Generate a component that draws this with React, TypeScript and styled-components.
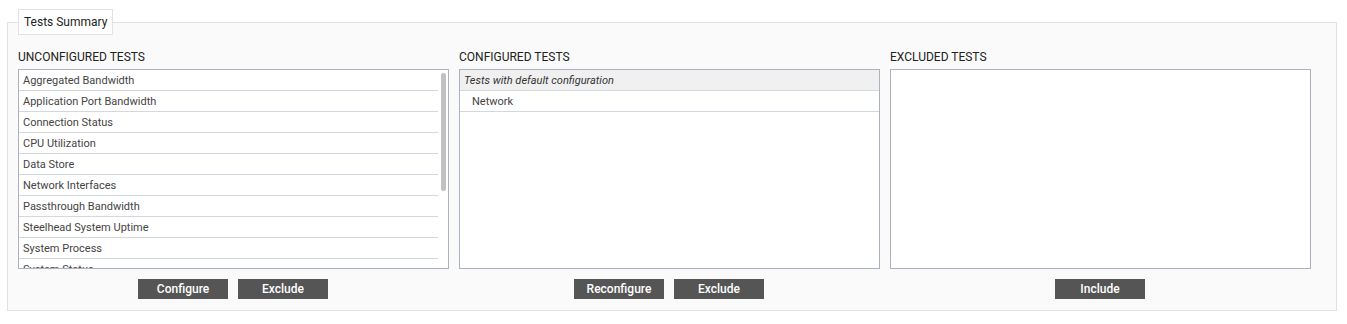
import styled, { createGlobalStyle } from "styled-components";

const unconfigured = [
  "Aggregated Bandwidth",
  "Application Port Bandwidth",
  "Connection Status",
  "CPU Utilization",
  "Data Store",
  "Network Interfaces",
  "Passthrough Bandwidth",
  "Steelhead System Uptime",
  "System Process",
  "System Status",
  "TCP Connections",
  "Temperature",
  "Throughput",
  "Traffic Summary",
  "Uptime",
  "WAN Bandwidth",
];

const GlobalStyle = createGlobalStyle`
  body {
    margin: 0;
    background: #fff;
    font-family: Roboto, "Liberation Sans", Arial, sans-serif;
  }
`;

export default function App() {
  return (
    <>
      <GlobalStyle />
      <Fieldset>
        <Legend>Tests Summary</Legend>
        <Columns>
          <Column>
            <Label>Unconfigured Tests</Label>
            <ListBox>
              <Rows>
                {unconfigured.map((name) => (
                  <Row key={name}>{name}</Row>
                ))}
              </Rows>
              <ScrollTrack>
                <ScrollThumb />
              </ScrollTrack>
            </ListBox>
            <Buttons>
              <Button>Configure</Button>
              <Button>Exclude</Button>
            </Buttons>
          </Column>
          <Column>
            <Label>Configured Tests</Label>
            <ListBox>
              <Rows>
                <GroupRow>Tests with default configuration</GroupRow>
                <Row $indent>Network</Row>
              </Rows>
            </ListBox>
            <Buttons>
              <Button>Reconfigure</Button>
              <Button>Exclude</Button>
            </Buttons>
          </Column>
          <Column>
            <Label>Excluded Tests</Label>
            <ListBox />
            <Buttons>
              <Button>Include</Button>
            </Buttons>
          </Column>
        </Columns>
      </Fieldset>
    </>
  );
}

const Fieldset = styled.fieldset`
  box-sizing: border-box;
  width: 1330px;
  min-width: 0;
  margin: 9px 0 0 7px;
  padding: 14px 10px 11px 10px;
  border: 1px solid #e2e2e2;
  background: #fafafa;
`;

const Legend = styled.legend`
  padding: 0 5px;
  border: 1px solid #e2e2e2;
  background: #fff;
  font-size: 12px;
  line-height: 24px;
  color: #222;
`;

const Columns = styled.div`
  display: grid;
  grid-template-columns: 431px 421px 421px;
  column-gap: 10px;
`;

const Column = styled.div`
  display: flex;
  flex-direction: column;
`;

const Label = styled.div`
  font-size: 12px;
  line-height: 16px;
  text-transform: uppercase;
  color: #222;
  margin-bottom: 4px;
`;

const ListBox = styled.div`
  box-sizing: border-box;
  height: 200px;
  display: flex;
  border: 1px solid #acb1c0;
  background: #fff;
  overflow: hidden;
`;

const Rows = styled.div`
  flex: 1;
  min-width: 0;
  overflow: hidden;
`;

const ScrollTrack = styled.div`
  width: 10px;
  padding: 3px 2px 0 2px;
  box-sizing: border-box;
`;

const ScrollThumb = styled.div`
  width: 5px;
  height: 118px;
  margin-left: 1px;
  border-radius: 2px;
  background: #c1c1c1;
`;

const Row = styled.div<{ $indent?: boolean }>`
  height: 20px;
  line-height: 21px;
  padding-left: ${(p) => (p.$indent ? "12px" : "4px")};
  border-bottom: 1px solid #d3d7df;
  font-size: 11px;
  color: #444;
  white-space: nowrap;
`;

const GroupRow = styled(Row)`
  background: #f0f0f0;
  font-style: italic;
  color: #333;
`;

const Buttons = styled.div`
  display: flex;
  justify-content: center;
  gap: 10px;
  margin-top: 10px;
  padding-right: 1px;
`;

const Button = styled.button`
  width: 90px;
  height: 20px;
  padding: 0;
  border: none;
  background: #555;
  color: #fff;
  font-family: Roboto, "Liberation Sans", Arial, sans-serif;
  font-size: 12px;
  font-weight: 500;
  cursor: pointer;
`;
